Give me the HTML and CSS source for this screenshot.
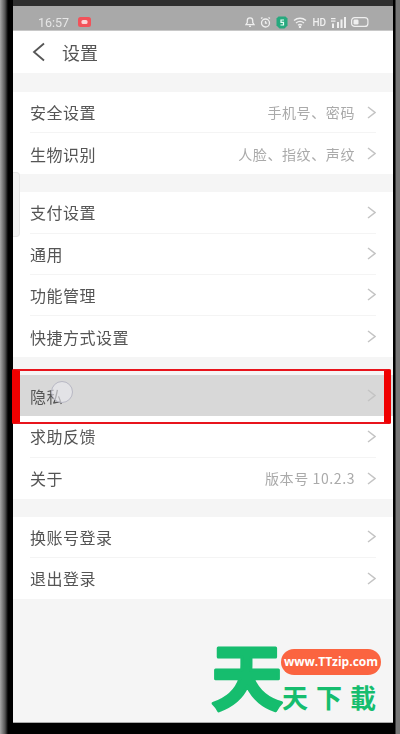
FILE: index.html
```html
<!DOCTYPE html>
<html lang="zh-CN">
<head>
  <meta charset="UTF-8">
  <meta name="viewport" content="width=device-width, initial-scale=1.0">
  <title>设置</title>
  <link rel="stylesheet" href="styles.css">
</head>
<body>
  <div class="phone">
    <div class="statusbar">
      <div class="status-left">
        <span class="time">16:57</span>
        <span class="rec">
          <svg width="13" height="10" viewBox="0 0 13 10"><rect width="13" height="10" rx="2.5" fill="#f2525a"/><rect x="3.5" y="3" width="6" height="4" rx="1.5" fill="#fbd5d7"/></svg>
        </span>
      </div>
      <div class="status-right">
        <svg width="10" height="10" viewBox="0 0 11 11" fill="none" stroke="#efefef" stroke-width="1.4"><path d="M1 8.500h9L8.500 6V4a3 3 0 0 0-6 0v2zM4.500 10.300h2"/></svg>
        <svg width="11" height="11" viewBox="0 0 11 11" fill="none" stroke="#efefef" stroke-width="1.3"><circle cx="5.500" cy="6" r="4"/><path d="M5.500 4v2.200h1.600M1 1.500l1.500-1M10 1.500l-1.500-1"/></svg>
        <svg width="12" height="13" viewBox="0 0 12 13"><path d="M2.500 0.500h7l2 2v7l-3 3h-5l-3-3v-7z" fill="#27a97e"/><path d="M8 4H5v2.300h2.500V9H4.500" fill="none" stroke="#e8fff6" stroke-width="1.200"/></svg>
        <svg width="14" height="11" viewBox="0 0 14 11" fill="none" stroke="#efefef" stroke-width="1.300"><path d="M1 3.500c3.500-3 8.500-3 12 0M3 6c2.500-2 5.500-2 8 0M5 8.300c1.300-1 2.700-1 4 0"/><circle cx="7" cy="10" r=".6" fill="#efefef"/></svg>
        <span class="hd">HD</span>
        <svg width="15" height="11" viewBox="0 0 15 11" fill="#efefef"><rect x="6" y="5" width="2" height="6"/><rect x="9.500" y="2.500" width="2" height="8.500"/><rect x="13" y="0" width="2" height="11"/><rect x="1" y="6.500" width="2" height="4.500"/><rect x="0" y="1" width="4.500" height="1.200"/><rect x="0" y="3.500" width="4.500" height="1.200"/></svg>
        <svg class="battery" width="18" height="10" viewBox="0 0 18 10"><rect x=".6" y=".6" width="16.300" height="8.800" rx="3" fill="none" stroke="#efefef" stroke-width="1.200"/><rect x="2.500" y="2.500" width="5" height="5" rx="1.200" fill="#efefef"/></svg>
      </div>
    </div>

    <div class="titlebar">
      <svg class="back" width="13" height="20" viewBox="0 0 13 20" fill="none" stroke="#555" stroke-width="1.800"><path d="M12 1.500 2 10l10 8.500"/></svg>
      <span class="title">设置</span>
    </div>

    <div class="group group-first">
      <div class="row"><span class="label">安全设置</span><span class="value">手机号、密码</span><svg class="chev" width="9" height="13" viewBox="0 0 9 13"><path d="M1 1l7 5.500-7 5.500"/></svg></div>
      <div class="row"><span class="label">生物识别</span><span class="value">人脸、指纹、声纹</span><svg class="chev" width="9" height="13" viewBox="0 0 9 13"><path d="M1 1l7 5.500-7 5.500"/></svg></div>
    </div>

    <div class="group">
      <div class="row"><span class="label">支付设置</span><svg class="chev" width="9" height="13" viewBox="0 0 9 13"><path d="M1 1l7 5.500-7 5.500"/></svg></div>
      <div class="row"><span class="label">通用</span><svg class="chev" width="9" height="13" viewBox="0 0 9 13"><path d="M1 1l7 5.500-7 5.500"/></svg></div>
      <div class="row"><span class="label">功能管理</span><svg class="chev" width="9" height="13" viewBox="0 0 9 13"><path d="M1 1l7 5.500-7 5.500"/></svg></div>
      <div class="row"><span class="label">快捷方式设置</span><svg class="chev" width="9" height="13" viewBox="0 0 9 13"><path d="M1 1l7 5.500-7 5.500"/></svg></div>
    </div>

    <div class="group">
      <div class="row row-pressed"><span class="label">隐私</span><svg class="chev" width="9" height="13" viewBox="0 0 9 13"><path d="M1 1l7 5.500-7 5.500"/></svg></div>
      <div class="row"><span class="label">求助反馈</span><svg class="chev" width="9" height="13" viewBox="0 0 9 13"><path d="M1 1l7 5.500-7 5.500"/></svg></div>
      <div class="row"><span class="label">关于</span><span class="value">版本号 10.2.3</span><svg class="chev" width="9" height="13" viewBox="0 0 9 13"><path d="M1 1l7 5.500-7 5.500"/></svg></div>
    </div>

    <div class="group">
      <div class="row"><span class="label">换账号登录</span><svg class="chev" width="9" height="13" viewBox="0 0 9 13"><path d="M1 1l7 5.500-7 5.500"/></svg></div>
      <div class="row"><span class="label">退出登录</span><svg class="chev" width="9" height="13" viewBox="0 0 9 13"><path d="M1 1l7 5.500-7 5.500"/></svg></div>
    </div>

    <!-- поверх контента -->
    <div class="side-tab"></div>
    <div class="touch-dot"></div>
    <div class="highlight"></div>
    <div class="watermark">
      <svg class="wm-big" width="100" height="110" viewBox="0 0 100 110"><text x="50" y="90" text-anchor="middle">天</text></svg>
      <span class="wm-url">www.TTzip.com</span>
      <span class="wm-name">天下載</span>
    </div>
  </div>
</body>
</html>
```

FILE: styles.css
```css
* {
  box-sizing: border-box;
}
html, body {
  height: 100%;
}
body {
  margin: 0;
  background:
    linear-gradient(#2f2f2f, #2f2f2f) 13px 0 / 380px 6px no-repeat,
    linear-gradient(90deg, #a8a8a8 0, #555 5px, #000 8px, #000 395px, #777 396px, #777 400px);
  font-family: "Noto Sans CJK SC", "Noto Sans", sans-serif;
  overflow: hidden;
}
.phone {
  position: relative;
  width: 380px;
  height: 717px;
  margin: 6px 0 0 13px;
  background: #f5f5f5;
  border-bottom: 1px solid #aaa;
}
.statusbar {
  display: flex;
  justify-content: space-between;
  align-items: center;
  height: 25px;
  padding: 8px 24px 0 25px;
  background: #a9a9a9;
  border-bottom: 1px solid #c8c8c8;
  filter: blur(0.4px);
}
.status-left, .status-right {
  display: flex;
  align-items: center;
}
.status-left {
  gap: 9px;
}
.status-right {
  gap: 5px;
}
.time {
  font-family: "Roboto", sans-serif;
  font-size: 12.500px;
  color: #e6e6e6;
}
.rec {
  display: flex;
}
.hd {
  font-family: "Roboto", sans-serif;
  font-size: 10px;
  font-weight: 500;
  color: #efefef;
}
.titlebar {
  display: flex;
  align-items: center;
  height: 42px;
  padding-left: 19px;
  background: #fff;
  filter: blur(0.4px);
}
.back {
  margin-right: 17px;
}
.title {
  font-size: 18px;
  color: #555;
}
.group {
  margin-top: 18px;
  padding: 0 17px;
  background: #fff;
  filter: blur(0.4px);
}
.group-first {
  margin-top: 19px;
}
.row {
  display: flex;
  align-items: center;
  height: 41.200px;
  border-bottom: 1px solid #f4f4f4;
}
.row:last-child {
  border-bottom: none;
}
.row-pressed {
  margin: 0 -17px;
  padding: 0 17px;
  background: #d8d8d8;
  border-bottom: none;
}
.label {
  flex: 1;
  font-size: 16px;
  color: #555;
  letter-spacing: 0.500px;
}
.value {
  margin-right: 12px;
  font-size: 14px;
  color: #aaa;
  letter-spacing: 0.600px;
}
.chev {
  fill: none;
  stroke: #c4c4c4;
  stroke-width: 1.500;
}
.side-tab {
  position: absolute;
  left: 0;
  top: 166px;
  width: 7px;
  height: 65px;
  background: #f2f2f2;
  border: 1px solid #e6e6e6;
  border-left: none;
  border-radius: 0 4px 4px 0;
}
.touch-dot {
  position: absolute;
  left: 38px;
  top: 375px;
  width: 22px;
  height: 22px;
  border-radius: 50%;
  background: rgba(235, 235, 240, 0.6);
  border: 1px solid #b8b8c4;
}
.highlight {
  position: absolute;
  left: -1px;
  top: 363px;
  width: 379px;
  height: 55px;
  border: 2px solid #e8141c;
  border-left: 8px solid #f00000;
  border-right: 7px solid #f00000;
  border-radius: 2px;
}
.watermark {
  position: absolute;
  left: 200px;
  top: 640px;
  width: 178px;
  height: 68px;
}
.wm-big {
  position: absolute;
  left: -16px;
  top: -32px;
  fill: #16bd6e;
  stroke: #16bd6e;
  stroke-width: 3;
  stroke-linejoin: round;
  stroke-linecap: round;
  font-size: 72px;
  font-weight: 700;
}
.wm-url {
  position: absolute;
  left: 68px;
  top: 3px;
  width: 100px;
  height: 26px;
  border-radius: 13px;
  background: #fb6440;
  color: #fff;
  font-family: "Open Sans", sans-serif;
  font-size: 12px;
  font-weight: 700;
  line-height: 26px;
  text-align: center;
}
.wm-name {
  position: absolute;
  left: 69px;
  top: 33px;
  font-size: 26px;
  line-height: 36px;
  font-weight: 700;
  color: #16bd6e;
  letter-spacing: 8px;
  white-space: nowrap;
}
```
